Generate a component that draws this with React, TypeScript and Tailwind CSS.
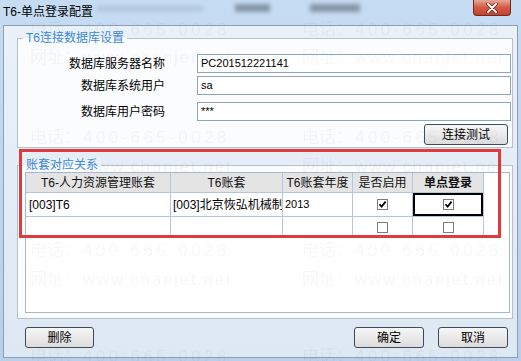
import React from "react";

const ui = "font-['Liberation_Sans','Noto_Sans_CJK_SC',sans-serif]";

const Check = ({ checked }: { checked?: boolean }) => (
  <span className="w-[11px] h-[11px] border border-[#7c7c7c] bg-white flex items-center justify-center">
    {checked && (
      <svg width="9" height="9" viewBox="0 0 9 9">
        <path d="M1.5 4.2 L3.6 6.6 L7.6 1.6" stroke="#000" strokeWidth="1.7" fill="none" />
      </svg>
    )}
  </span>
);

const WinButton = ({ label, className }: { label: string; className: string }) => (
  <button
    className={
      "h-[21px] rounded-[3px] border border-[#3d4b5a] bg-gradient-to-b from-[#f7f7f7] to-[#dcdcdc] text-[12px] leading-none text-black flex items-center justify-center " +
      className
    }
  >
    {label}
  </button>
);

const Field = ({ label, value, className }: { label: string; value: string; className: string }) => (
  <div className={"flex items-center h-[19px] " + className}>
    <span className="w-[147px] text-right text-[12px] leading-none text-black">{label}</span>
    <div className="ml-[32px] mr-[1px] flex-1 h-[19px] border border-[#8ea5bc] bg-white flex items-center pl-[3px] text-[11px] leading-none text-black">
      {value}
    </div>
  </div>
);

const cols = ["w-[145px]", "w-[112px]", "w-[70px]", "w-[60px]", "w-[71px]"];

const Watermark = ({ top, left, kind }: { top: number; left: number; kind: "tel" | "web" }) => (
  <div
    className="absolute whitespace-nowrap text-[17px] leading-[18px] text-black/[0.055] font-['Liberation_Sans','Noto_Sans_CJK_SC',sans-serif]"
    style={{ top, left }}
  >
    {kind === "tel" ? (
      <>
        <span>电话：</span>
        <span className="tracking-[3.4px] ml-[2px]">400-665-0028</span>
      </>
    ) : (
      <>
        <span>网址：</span>
        <span className="tracking-[1.7px] ml-[2px]">www.chanjet.net</span>
      </>
    )}
  </div>
);

export default function App() {
  return (
    <div
      className={
        "relative w-[521px] h-[361px] overflow-hidden flex flex-col px-[3px] pb-[3px] bg-gradient-to-b from-[#c6dcf2] to-[#b7cfe8] " +
        ui
      }
    >
      {/* Title bar */}
      <div className="h-[25px] flex items-start">
        <span className="w-[94px] mt-[5px] text-[12px] leading-[14px] text-black whitespace-nowrap">T6-单点登录配置</span>
        <div className="mt-[6px] w-[106px] h-[5px] bg-[#7e93a8]/30 blur-[2px]" />
        <div className="ml-[32px] mt-[4px] w-[35px] h-[8px] bg-[#43525f]/50 blur-[2px]" />
        <div className="ml-[40px] mt-[4px] w-[50px] h-[8px] bg-[#43525f]/50 blur-[2px]" />
        <div className="ml-auto mr-[7px] w-[38px] h-[16px] rounded-b-[4px] border border-t-0 border-[#6b2a22] bg-gradient-to-b from-[#e8a596] via-[#d35a45] to-[#c4422c] flex items-center justify-center">
          <svg width="12" height="10" viewBox="0 0 12 10">
            <path d="M2 1 L10 9 M10 1 L2 9" stroke="#5a1a12" strokeWidth="3.4" strokeLinecap="round" />
            <path d="M2 1 L10 9 M10 1 L2 9" stroke="#fff" strokeWidth="2" strokeLinecap="round" />
          </svg>
        </div>
      </div>

      {/* Client area */}
      <div className="flex-1 border border-[#8aa0b7] bg-gradient-to-b from-[#eaf1f8] to-[#dde8f2] flex flex-col">
        {/* Group 1 */}
        <div className="relative mt-[12px] ml-[13px] mr-[4px] h-[110px] border border-[#b5c1cd] bg-[#fbfcfe] flex flex-col">
          <span className="absolute -top-[8px] left-[5px] px-[3px] text-[12px] leading-[14px] text-[#3b8ad9] bg-[linear-gradient(to_bottom,#eaf1f8_50%,#fbfcfe_50%)]">
            T6连接数据库设置
          </span>
          <Field className="mt-[15px]" label="数据库服务器名称" value="PC201512221141" />
          <Field className="mt-[3px]" label="数据库系统用户" value="sa" />
          <Field className="mt-[7px]" label="数据库用户密码" value="***" />
          <WinButton label="连接测试" className="self-end mt-[3px] mr-[4px] w-[84px]" />
        </div>

        {/* Group 2 */}
        <div className="relative mt-[17px] ml-[13px] mr-[4px] h-[154px] border border-[#b5c1cd] bg-[#fbfcfe] flex flex-col">
          <span className="absolute -top-[8px] left-[5px] px-[3px] text-[12px] leading-[14px] text-[#3b8ad9] bg-[linear-gradient(to_bottom,#eaf1f8_50%,#fbfcfe_50%)]">
            账套对应关系
          </span>
          <div className="mt-[6px] ml-[7px] mr-[2px] h-[141px] border border-[#a6b9cc] bg-white">
            {/* Header */}
            <div className="flex h-[20px]">
              {["T6-人力资源管理账套", "T6账套", "T6账套年度", "是否启用", "单点登录"].map((h, i) => (
                <div
                  key={h}
                  className={
                    cols[i] +
                    " shrink-0 border-r border-b border-[#b3c6dd] bg-[#e4e4e4] flex items-center justify-center text-[12px] leading-none text-[#111] whitespace-nowrap " +
                    (i === 4 ? "font-bold" : "")
                  }
                >
                  {h}
                </div>
              ))}
            </div>
            {/* Row 1 */}
            <div className="flex h-[24px]">
              <div className={cols[0] + " shrink-0 border-r border-b border-[#b3c6dd] flex items-center pl-[3px] text-[12px] leading-none"}>
                [003]T6
              </div>
              <div className={cols[1] + " shrink-0 border-r border-b border-[#b3c6dd] flex items-center pl-[2px] text-[12px] leading-none whitespace-nowrap overflow-hidden"}>
                [003]北京恢弘机械制造有限公司
              </div>
              <div className={cols[2] + " shrink-0 border-r border-b border-[#b3c6dd] flex items-center pl-[2px] text-[11px] leading-none"}>
                2013
              </div>
              <div className={cols[3] + " shrink-0 border-r border-b border-[#b3c6dd] flex items-center justify-center"}>
                <Check checked />
              </div>
              <div className={cols[4] + " shrink-0 border-r border-b border-[#b3c6dd] flex"}>
                <div className="flex-1 border-2 border-black flex items-center justify-center">
                  <Check checked />
                </div>
              </div>
            </div>
            {/* Row 2 */}
            <div className="flex h-[21px]">
              <div className={cols[0] + " shrink-0 border-r border-b border-[#b3c6dd]"} />
              <div className={cols[1] + " shrink-0 border-r border-b border-[#b3c6dd]"} />
              <div className={cols[2] + " shrink-0 border-r border-b border-[#b3c6dd]"} />
              <div className={cols[3] + " shrink-0 border-r border-b border-[#b3c6dd] flex items-center justify-center"}>
                <Check />
              </div>
              <div className={cols[4] + " shrink-0 border-r border-b border-[#b3c6dd] flex items-center justify-center"}>
                <Check />
              </div>
            </div>
          </div>
        </div>

        {/* Buttons */}
        <div className="mt-[8px] flex">
          <WinButton label="删除" className="ml-[21px] w-[69px]" />
          <WinButton label="确定" className="ml-auto w-[70px]" />
          <WinButton label="取消" className="ml-[14px] mr-[9px] w-[70px]" />
        </div>
      </div>

      {/* Highlight frame */}
      <div className="absolute left-[19px] top-[149px] w-[482px] h-[89px] border-[3px] border-[#e23a3c] pointer-events-none" />

      {/* Watermarks */}
      <div className="absolute inset-0 pointer-events-none">
        {[21, 129, 242, 348].map((t) => (
          <React.Fragment key={t}>
            <Watermark top={t} left={30} kind="tel" />
            <Watermark top={t} left={302} kind="tel" />
          </React.Fragment>
        ))}
        {[49, 158, 271].map((t) => (
          <React.Fragment key={t}>
            <Watermark top={t} left={30} kind="web" />
            <Watermark top={t} left={302} kind="web" />
          </React.Fragment>
        ))}
      </div>
    </div>
  );
}
